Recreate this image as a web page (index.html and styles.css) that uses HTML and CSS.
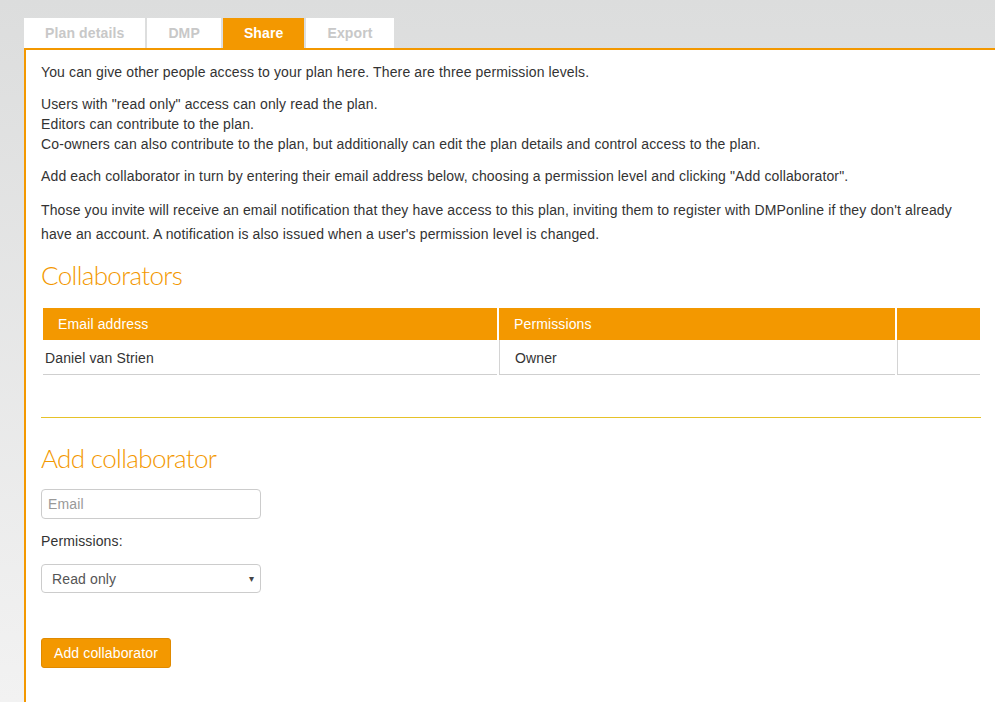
FILE: index.html
```html
<!DOCTYPE html>
<html>
<head>
<meta charset="utf-8">
<link rel="stylesheet" href="styles.css">
</head>
<body>
<div class="page">
  <div class="tabs">
    <div class="tab">Plan details</div>
    <div class="tab">DMP</div>
    <div class="tab active">Share</div>
    <div class="tab">Export</div>
  </div>
  <div class="panel">
    <p>You can give other people access to your plan here. There are three permission levels.</p>
    <p>Users with "read only" access can only read the plan.<br>Editors can contribute to the plan.<br>Co-owners can also contribute to the plan, but additionally can edit the plan details and control access to the plan.</p>
    <p>Add each collaborator in turn by entering their email address below, choosing a permission level and clicking "Add collaborator".</p>
    <p class="tall">Those you invite will receive an email notification that they have access to this plan, inviting them to register with DMPonline if they don't already have an account. A notification is also issued when a user's permission level is changed.</p>
    <h2 class="first">Collaborators</h2>
    <table class="collab">
      <thead>
        <tr><th class="c1">Email address</th><th class="c2">Permissions</th><th class="c3"></th></tr>
      </thead>
      <tbody>
        <tr><td class="c1">Daniel van Strien</td><td class="c2">Owner</td><td class="c3"></td></tr>
      </tbody>
    </table>
    <div class="rule"></div>
    <h2 class="second">Add collaborator</h2>
    <div class="field"><input class="input" type="text" placeholder="Email"></div>
    <div class="label">Permissions:</div>
    <div class="select"><span>Read only</span><span class="arrow">&#9662;</span></div>
    <button class="btn">Add collaborator</button>
  </div>
</div>
</body>
</html>
```
FILE: styles.css
```css
html, body {
  margin: 0;
  padding: 0;
  height: 100%;
  overflow: hidden;
}
body {
  background: linear-gradient(#dcdddd, #f2f2f2);
  font-family: "Liberation Sans", Arial, sans-serif;
  font-size: 14px;
  letter-spacing: 0.13px;
  color: #333;
}
.page {
  padding: 18px 0 0 24px;
}
.tabs {
  display: flex;
  gap: 2px;
}
.tab {
  background: #fff;
  color: #c8c8c8;
  font-weight: bold;
  font-size: 14px;
  height: 30px;
  line-height: 30px;
  padding: 0 21px;
}
.tab.active {
  background: #f39800;
  color: #fff;
}
.panel {
  box-sizing: border-box;
  background: #fff;
  border: 2px solid #f39800;
  border-bottom: none;
  width: 974px;
  height: 654px;
  padding: 12px 15px 0 15px;
}
p {
  margin: 0 0 12px 0;
  line-height: 20px;
}
p.tall {
  line-height: 24px;
}
h2 {
  font-family: "Lato", sans-serif;
  font-weight: 300;
  font-size: 26px;
  letter-spacing: -0.65px;
  line-height: 30px;
  color: #f39800;
  margin: 0;
}
h2.first {
  margin-top: 14px;
  margin-bottom: 18px;
}
h2.second {
  margin-top: 25px;
  margin-bottom: 16px;
}
.collab {
  border-collapse: collapse;
  margin-left: 2px;
  width: 937px;
}
.collab th {
  background: #f39800;
  color: #fff;
  font-weight: normal;
  text-align: left;
  height: 32px;
  padding: 0 0 0 15px;
}
.collab th.c1 { width: 439px; }
.collab th.c2, .collab th.c3,
.collab td.c2, .collab td.c3 {
  border-left: 2px solid #fff;
}
.collab th.c2 { width: 381px; }
.collab td {
  height: 32px;
  border-bottom: 1px solid #cfcfcf;
  padding: 2px 0 0 0;
}
.collab td.c1 { padding-left: 2px; }
.collab td.c2, .collab td.c3 {
  background: linear-gradient(#d4d4d4, #d4d4d4) left top / 1px 100% no-repeat;
  padding-left: 16px;
}
.rule {
  height: 1px;
  background: #e6c229;
  margin-top: 42px;
}
.input {
  display: block;
  box-sizing: border-box;
  width: 220px;
  height: 30px;
  border: 1px solid #ccc;
  border-radius: 4px;
  padding: 0 6px;
  font-family: "Liberation Sans", Arial, sans-serif;
  font-size: 14px;
  letter-spacing: 0.13px;
  color: #555;
  outline: none;
}
.input::placeholder {
  color: #999;
}
.label {
  margin-top: 12px;
  line-height: 20px;
}
.select {
  box-sizing: border-box;
  margin-top: 13px;
  width: 220px;
  height: 29px;
  border: 1px solid #ccc;
  border-radius: 4px;
  display: flex;
  align-items: center;
  justify-content: space-between;
  padding: 0 6px 0 10px;
  color: #555;
}
.select .arrow {
  font-size: 10px;
  color: #444;
}
.btn {
  display: block;
  margin-top: 45px;
  height: 30px;
  width: 130px;
  background: #f39800;
  color: #fff;
  border: 1px solid #e08a00;
  border-radius: 3px;
  font-family: "Liberation Sans", Arial, sans-serif;
  font-size: 14px;
  letter-spacing: 0.13px;
  padding: 0;
}
```
